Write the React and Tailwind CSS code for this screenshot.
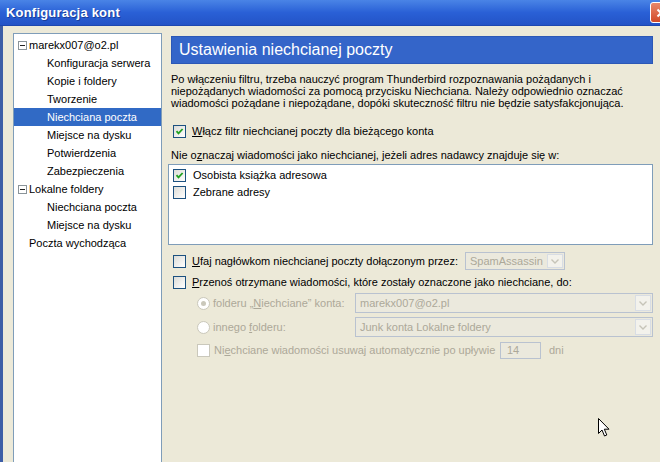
import React from "react";

const FONT = { fontFamily: '"Liberation Sans", Arial, sans-serif' };

function Check({ checked, disabled }) {
  return (
    <span
      className={`relative inline-block w-[13px] h-[13px] shrink-0 border ${
        disabled
          ? "border-[#cac8bb] bg-white"
          : "border-[#1c5180] bg-gradient-to-br from-[#dcdcd7] to-white"
      }`}
    >
      {checked && (
        <svg viewBox="0 0 11 11" className="absolute inset-0 w-[11px] h-[11px]">
          <path d="M2.5 5.2 L4.5 7.4 L8.6 3" fill="none" stroke="#21a121" strokeWidth="1.8" />
        </svg>
      )}
    </span>
  );
}

function Radio({ checked }) {
  return (
    <span className="relative inline-flex w-[13px] h-[13px] shrink-0 items-center justify-center rounded-full border border-[#cac8bb] bg-white">
      {checked && <span className="w-[5px] h-[5px] rounded-full bg-[#cac8bb]" />}
    </span>
  );
}

function Combo({ value, className = "", h = "h-[19px]" }) {
  return (
    <div className={`flex ${h} items-center border border-[#b9c2d0] bg-[#ebe9dd] ${className}`}>
      <span className="flex-1 pl-[4px] text-[#aca899] whitespace-nowrap overflow-hidden">{value}</span>
      <span className="mr-[1px] flex h-[calc(100%-2px)] w-[16px] items-center justify-center border border-[#d8dde4] bg-[#f3f2ec]">
        <svg viewBox="0 0 8 5" className="w-[8px] h-[5px]">
          <path d="M0.5 0.5 L4 4 L7.5 0.5" fill="none" stroke="#c6c4b8" strokeWidth="1.4" />
        </svg>
      </span>
    </div>
  );
}

function MinusBox() {
  return (
    <span className="relative inline-block w-[9px] h-[9px] shrink-0 border border-[#8a9499] bg-white">
      <span className="absolute left-[1px] top-[3px] w-[5px] h-[1px] bg-[#222]" />
    </span>
  );
}

const TREE = [
  { label: "marekx007@o2.pl", top: true },
  { label: "Konfiguracja serwera" },
  { label: "Kopie i foldery" },
  { label: "Tworzenie" },
  { label: "Niechciana poczta", selected: true },
  { label: "Miejsce na dysku" },
  { label: "Potwierdzenia" },
  { label: "Zabezpieczenia" },
  { label: "Lokalne foldery", top: true },
  { label: "Niechciana poczta" },
  { label: "Miejsce na dysku" },
  { label: "Poczta wychodząca", plain: true },
];

export default function App() {
  return (
    <div
      className="relative w-[660px] h-[462px] overflow-hidden bg-[#ece9d8] flex flex-col text-[11px] text-black"
      style={FONT}
    >
      {/* title bar */}
      <div className="flex h-[26px] shrink-0 items-center bg-gradient-to-b from-[#4a84e6] via-[#2a60d6] to-[#2353c6] border-b border-[#1d47b0]">
        <span className="pl-[6px] flex-1 text-[13px] font-bold text-white tracking-[0.2px] [text-shadow:1px_1px_0_#1a3e9a]">
          Konfiguracja kont
        </span>
        <span className="mr-[-12px] flex h-[21px] w-[22px] items-center justify-center rounded-[3px] border border-white bg-gradient-to-b from-[#e9876a] to-[#d24a26]">
          <svg viewBox="0 0 10 10" className="w-[10px] h-[10px]">
            <path d="M1.5 1.5 L8.5 8.5 M8.5 1.5 L1.5 8.5" stroke="white" strokeWidth="2" />
          </svg>
        </span>
      </div>

      <div className="flex flex-1 border-l-[3px] border-[#3d5ea6]">
        {/* tree */}
        <div className="ml-[10px] mt-[7px] w-[149px] shrink-0 border border-b-0 border-[#7f9db9] bg-white pt-[2px]">
          {TREE.map((t, i) => (
            <div
              key={i}
              className={`flex h-[18px] items-center whitespace-nowrap ${
                t.selected ? "bg-[#316ac5] text-white" : ""
              } ${t.top ? "pl-[4px] gap-[1px]" : t.plain ? "pl-[15px]" : "pl-[33px]"}`}
            >
              {t.top && <MinusBox />}
              <span className={t.top ? "ml-[1px]" : ""}>{t.label}</span>
            </div>
          ))}
        </div>

        {/* settings */}
        <div className="ml-[6px] mr-[7px] flex-1 flex flex-col">
          <div className="ml-[3px] mt-[10px] flex h-[28px] items-center bg-[#3465c9] border border-[#2c58b6] pl-[7px] text-[16px] text-white">
            Ustawienia niechcianej poczty
          </div>

          <p className="mt-[9px] pl-[3px] leading-[12px] whitespace-nowrap">
            Po włączeniu filtru, trzeba nauczyć program Thunderbird rozpoznawania pożądanych i
            <br />
            niepożądanych wiadomości za pomocą przycisku Niechciana. Należy odpowiednio oznaczać
            <br />
            wiadomości pożądane i niepożądane, dopóki skuteczność filtru nie będzie satysfakcjonująca.
          </p>

          <div className="mt-[14px] flex h-[16px] items-center gap-[6px] pl-[5px]">
            <Check checked />
            <span>
              <u>W</u>łącz filtr niechcianej poczty dla bieżącego konta
            </span>
          </div>

          <div className="mt-[8px] flex h-[16px] items-center pl-[3px]">
            Nie o<u>z</u>naczaj wiadomości jako niechcianej, jeżeli adres nadawcy znajduje się w:
          </div>

          <div className="mt-[1px] h-[81px] border border-[#7f9db9] bg-white pl-[4px] pt-[2px]">
            <div className="flex h-[16px] items-center gap-[7px]">
              <Check checked />
              <span>Osobista książka adresowa</span>
            </div>
            <div className="mt-[1px] flex h-[16px] items-center gap-[7px]">
              <Check />
              <span>Zebrane adresy</span>
            </div>
          </div>

          <div className="mt-[6px] flex h-[20px] items-center pl-[5px]">
            <Check />
            <span className="ml-[6px] w-[273px] whitespace-nowrap">
              <u>U</u>faj nagłówkom niechcianej poczty dołączonym przez:
            </span>
            <Combo value="SpamAssassin" className="w-[100px]" h="h-[18px]" />
          </div>

          <div className="mt-[3px] flex h-[16px] items-center gap-[6px] pl-[5px]">
            <Check />
            <span>
              <u>P</u>rzenoś otrzymane wiadomości, które zostały oznaczone jako niechciane, do:
            </span>
          </div>

          <div className="mt-[3px] flex h-[20px] items-center pl-[29px] text-[#aca899]">
            <div className="flex w-[158px] items-center gap-[3px] whitespace-nowrap">
              <Radio checked />
              <span>
                folderu „<u>N</u>iechciane” konta:
              </span>
            </div>
            <Combo value="marekx007@o2.pl" className="flex-1" h="h-[20px]" />
          </div>

          <div className="mt-[4px] flex h-[20px] items-center pl-[29px] text-[#aca899]">
            <div className="flex w-[158px] items-center gap-[3px] whitespace-nowrap">
              <Radio />
              <span>
                innego <u>f</u>olderu:
              </span>
            </div>
            <Combo value="Junk konta Lokalne foldery" className="flex-1" h="h-[20px]" />
          </div>

          <div className="mt-[4px] flex h-[18px] items-center pl-[29px] text-[#aca899]">
            <Check disabled />
            <span className="ml-[4px] w-[286px] whitespace-nowrap">
              Ni<u>e</u>chciane wiadomości usuwaj automatycznie po upływie
            </span>
            <span className="flex h-[17px] w-[41px] items-center border border-[#b9c2d0] bg-[#ebe9dd] pl-[6px]">
              14
            </span>
            <span className="ml-[8px]">dni</span>
          </div>
        </div>
      </div>

      {/* mouse pointer */}
      <svg viewBox="0 0 12 20" className="absolute left-[598px] top-[418px] w-[12px] h-[20px]">
        <path
          d="M0.5 0.5 L0.5 15.5 L4 12 L6.5 18 L8.8 17 L6.3 11.2 L11 11.2 Z"
          fill="white"
          stroke="black"
          strokeWidth="1"
          strokeLinejoin="round"
        />
      </svg>
    </div>
  );
}
